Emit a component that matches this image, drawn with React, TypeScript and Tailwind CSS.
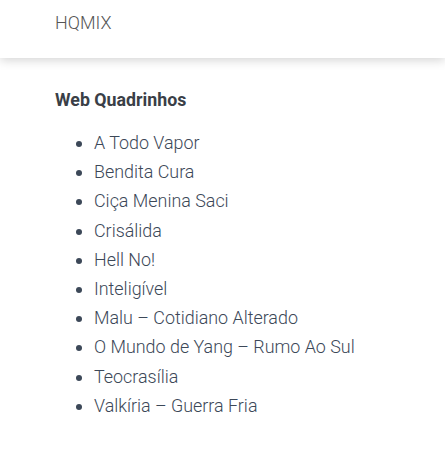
const comics = [
  "A Todo Vapor",
  "Bendita Cura",
  "Ciça Menina Saci",
  "Crisálida",
  "Hell No!",
  "Inteligível",
  "Malu – Cotidiano Alterado",
  "O Mundo de Yang – Rumo Ao Sul",
  "Teocrasília",
  "Valkíria – Guerra Fria",
];

export default function App() {
  return (
    <div className="min-h-[450px] bg-white font-['Roboto',sans-serif]">
      {/* Top bar */}
      <header className="relative h-[58px] bg-white px-[55px] pt-[11px] shadow-[0_2px_10px_rgba(0,0,0,0.18)]">
        <a href="#" className="text-[18px] font-light leading-[24px] text-[#555]">
          HQMIX
        </a>
      </header>

      {/* Widget */}
      <section className="px-[55px] pt-[31px]">
        <h2 className="text-[17.8px] font-bold leading-[22px] text-[#3a3f47]">
          Web Quadrinhos
        </h2>
        <ul className="mt-[17px] list-disc pl-[39px] marker:text-[#3c4858]">
          {comics.map((c) => (
            <li
              key={c}
              className="text-[17.9px] font-light leading-[29.2px] text-[#3c4858]"
            >
              <a href="#">{c}</a>
            </li>
          ))}
        </ul>
      </section>
    </div>
  );
}
